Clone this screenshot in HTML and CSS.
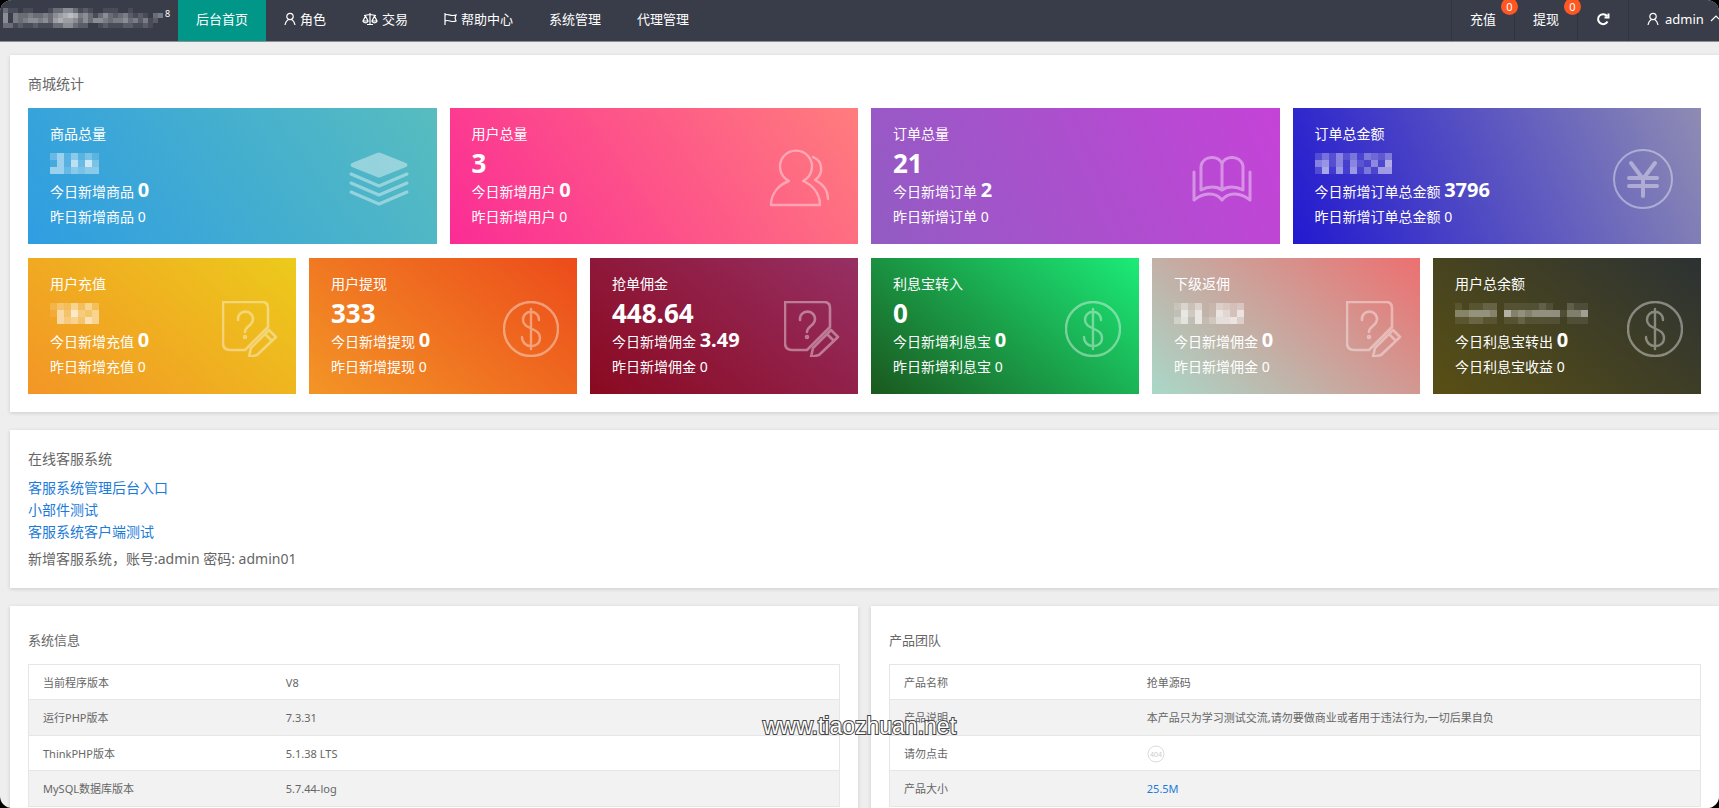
FILE: index.html
```
<!DOCTYPE html>
<html lang="zh-CN">
<head>
    <meta charset="UTF-8">
    <meta name="viewport" content="width=device-width, initial-scale=1.0">
    <title>后台首页</title>
    <link rel="stylesheet" href="styles.css">
</head>
<body>

    <!-- shared icons -->
    <svg class="sprite" aria-hidden="true">
        <symbol id="i-user" viewBox="0 0 12 14">
            <circle cx="6" cy="4.5" r="3.2"/>
            <path d="M4.5 7.5C2.5 8.5 1.5 10.5 1 13M7.5 7.5c2 1 3 3 3.500 5.500"/>
        </symbol>
        <symbol id="i-dollar" viewBox="0 0 56 56" stroke-width="2.4">
            <circle cx="28" cy="28" r="27"/>
            <path d="M36 19C36 8 20 8 20 19C20 29 37 26 37 37C37 48 19 48 19 36M28 8V48"/>
        </symbol>
        <symbol id="i-note" viewBox="0 0 56 56" stroke-width="2.6">
            <path d="M1 1H40Q46 1 46 7V26L23 49H8Q1 49 1 42Z"/>
            <path d="M16 19C15 8 31 8 31 18C31 25 23 25 23 31"/>
            <circle cx="23" cy="36" r="1"/>
            <path d="M27 56L29 47L47 29L54 36L35 54ZM43 33L50 40"/>
        </symbol>
    </svg>

    <div class="app">
        <header class="header">
            <div class="logo"><span class="mosaic small" data-cells="31101100013355312100111001000000/50433433435678745313532342121034/50434554536766535355434453424120/33121121113355322001211122112100"></span><sup>8</sup></div>
            <nav class="nav">
                <a class="active" href="#">后台首页</a>
                <a href="#"><svg class="ico" width="12" height="14"><use href="#i-user"/></svg>角色</a>
                <a href="#"><svg class="ico" width="16" height="14" viewBox="0 0 16 14"><path d="M8 1V12M5 12.500H11M2 3.500L8 2.500L14 3.500M3.500 4L1 9H6ZM12.500 4L10 9H15ZM1 9C1.500 11.500 5.500 11.500 6 9M10 9C10.500 11.500 14.500 11.500 15 9"/></svg>交易</a>
                <a href="#"><svg class="ico" width="13" height="14" viewBox="0 0 13 14"><path d="M1 1V13M1 3C4 1 6 5 12 3L11 6L12 9C7 11 5 7 1 9"/></svg>帮助中心</a>
                <a href="#">系统管理</a>
                <a href="#">代理管理</a>
            </nav>
            <nav class="nav nav-right">
                <a href="#">充值<span class="badge">0</span></a>
                <a href="#">提现<span class="badge">0</span></a>
                <a href="#" aria-label="刷新"><svg class="ico bold" width="14" height="14" viewBox="0 0 14 14"><path d="M11.500 9.500A5 5 0 1 1 11 4M12.500 1.500V5.500H8.500"/></svg></a>
                <a class="account" href="#"><svg class="ico" width="12" height="14"><use href="#i-user"/></svg>admin<svg class="ico caret" width="12" height="14" viewBox="0 0 12 14"><path d="M1 9L6 4L11 9"/></svg></a>
            </nav>
        </header>

        <main class="main">
            <section class="panel">
                <h2 class="title">商城统计</h2>
                <div class="cards cards-4">
                    <div class="card blue">
                        <div>
                            <div class="name">商品总量</div>
                            <div class="total"><span class="mosaic" data-cells="3625242/1628394/6635455"></span></div>
                            <div class="today">今日新增商品 <b>0</b></div>
                            <div class="yesterday">昨日新增商品 0</div>
                        </div>
                        <svg class="pic" viewBox="0 0 60 60">
                            <path class="fill" d="M28 4Q30 3 32 4L57 14Q60 16 57 18L32 28Q30 29 28 28L3 18Q0 16 3 14Z"/>
                            <path class="thick" d="M2 25L30 37L58 25M2 34L30 46L58 34M2 43L30 55L58 43"/>
                        </svg>
                    </div>
                    <div class="card pink">
                        <div>
                            <div class="name">用户总量</div>
                            <div class="total">3</div>
                            <div class="today">今日新增用户 <b>0</b></div>
                            <div class="yesterday">昨日新增用户 0</div>
                        </div>
                        <svg class="pic" viewBox="0 0 60 60">
                            <g stroke-width="2.4">
                                <path d="M19 32A16 16 0 1 1 33 32C43 36 50 45 50 56H1C1 45 8 36 19 32Z"/>
                                <path d="M43 8C53 12 54 25 45 31C53 35 58 42 58 50"/>
                            </g>
                        </svg>
                    </div>
                    <div class="card purple">
                        <div>
                            <div class="name">订单总量</div>
                            <div class="total">21</div>
                            <div class="today">今日新增订单 <b>2</b></div>
                            <div class="yesterday">昨日新增订单 0</div>
                        </div>
                        <svg class="pic" viewBox="0 0 60 60">
                            <path class="thick" d="M2 23V51C11 44 23 42 30 51C37 42 49 44 58 51V23"/>
                            <path class="thick" d="M30 41C25 37 16 37 9 41V17C11 6 28 6 30 15C32 6 49 6 51 17V41C44 37 35 37 30 41V15"/>
                        </svg>
                    </div>
                    <div class="card indigo">
                        <div>
                            <div class="name">订单总金额</div>
                            <div class="total"><span class="mosaic" data-cells="24252414324/56251521517/27161614166"></span></div>
                            <div class="today">今日新增订单总金额 <b>3796</b></div>
                            <div class="yesterday">昨日新增订单总金额 0</div>
                        </div>
                        <svg class="pic" viewBox="0 0 60 60">
                            <circle cx="30" cy="30" r="29"/>
                            <path class="heavy" d="M18 14L30 30L42 14M30 30V47M16 29H44M16 37H44"/>
                        </svg>
                    </div>
                </div>
                <div class="cards cards-6">
                    <div class="card yellow">
                        <div>
                            <div class="name">用户充值</div>
                            <div class="total"><span class="mosaic" data-cells="2436363/1749546/0756486"></span></div>
                            <div class="today">今日新增充值 <b>0</b></div>
                            <div class="yesterday">昨日新增充值 0</div>
                        </div>
                        <svg class="pic"><use href="#i-note"/></svg>
                    </div>
                    <div class="card orange">
                        <div>
                            <div class="name">用户提现</div>
                            <div class="total">333</div>
                            <div class="today">今日新增提现 <b>0</b></div>
                            <div class="yesterday">昨日新增提现 0</div>
                        </div>
                        <svg class="pic"><use href="#i-dollar"/></svg>
                    </div>
                    <div class="card maroon">
                        <div>
                            <div class="name">抢单佣金</div>
                            <div class="total">448.64</div>
                            <div class="today">今日新增佣金 <b>3.49</b></div>
                            <div class="yesterday">昨日新增佣金 0</div>
                        </div>
                        <svg class="pic"><use href="#i-note"/></svg>
                    </div>
                    <div class="card green">
                        <div>
                            <div class="name">利息宝转入</div>
                            <div class="total">0</div>
                            <div class="today">今日新增利息宝 <b>0</b></div>
                            <div class="yesterday">昨日新增利息宝 0</div>
                        </div>
                        <svg class="pic"><use href="#i-dollar"/></svg>
                    </div>
                    <div class="card rose">
                        <div>
                            <div class="name">下级返佣</div>
                            <div class="total"><span class="mosaic" data-cells="2525015434/1838018638/4718137785"></span></div>
                            <div class="today">今日新增佣金 <b>0</b></div>
                            <div class="yesterday">昨日新增佣金 0</div>
                        </div>
                        <svg class="pic"><use href="#i-note"/></svg>
                    </div>
                    <div class="card olive">
                        <div>
                            <div class="name">用户总余额</div>
                            <div class="total"><span class="mosaic" data-cells="1011220111112100211/4455540745455551446/1122110112111110111"></span></div>
                            <div class="today">今日利息宝转出 <b>0</b></div>
                            <div class="yesterday">今日利息宝收益 0</div>
                        </div>
                        <svg class="pic"><use href="#i-dollar"/></svg>
                    </div>
                </div>
            </section>

            <section class="panel">
                <h2 class="title">在线客服系统</h2>
                <ul class="links">
                    <li><a href="#">客服系统管理后台入口</a></li>
                    <li><a href="#">小部件测试</a></li>
                    <li><a href="#">客服系统客户端测试</a></li>
                </ul>
                <p class="note">新增客服系统，账号:admin 密码: admin01</p>
            </section>

            <div class="columns">
                <section class="panel info">
                    <h2 class="title">系统信息</h2>
                    <table class="table">
                        <tr><th>当前程序版本</th><td>V8</td></tr>
                        <tr><th>运行PHP版本</th><td>7.3.31</td></tr>
                        <tr><th>ThinkPHP版本</th><td>5.1.38 LTS</td></tr>
                        <tr><th>MySQL数据库版本</th><td>5.7.44-log</td></tr>
                    </table>
                </section>
                <section class="panel info">
                    <h2 class="title">产品团队</h2>
                    <table class="table">
                        <tr><th>产品名称</th><td>抢单源码</td></tr>
                        <tr><th>产品说明</th><td>本产品只为学习测试交流,请勿要做商业或者用于违法行为,一切后果自负</td></tr>
                        <tr><th>请勿点击</th><td><a class="circle" href="#"><svg width="18" height="18" viewBox="0 0 18 18"><circle cx="9" cy="9" r="8"/><text x="9" y="12" text-anchor="middle">404</text></svg></a></td></tr>
                        <tr><th>产品大小</th><td><a href="#">25.5M</a></td></tr>
                    </table>
                </section>
            </div>
        </main>

        <div class="watermark">www.tiaozhuan.net</div>
    </div>

    <script>
        // hidden values: each digit is the opacity of one cell, "/" starts a new row
        document.querySelectorAll('.mosaic').forEach((el) => {
            const rows = el.dataset.cells.split('/');
            const size = el.classList.contains('small') ? 5 : 7;
            let rects = '';
            rows.forEach((row, y) => {
                [...row].forEach((cell, x) => {
                    rects += `<rect x="${x * size}" y="${y * size}" width="${size}" height="${size}" fill-opacity="${cell / 12}"/>`;
                });
            });
            el.innerHTML = `<svg width="${rows[0].length * size}" height="${rows.length * size}" shape-rendering="crispEdges">${rects}</svg>`;
        });
    </script>

</body>
</html>
```

FILE: styles.css
```
* {
    box-sizing: border-box;
}

html {
    background: #000;
}

body {
    margin: 0;
    font-family: "Noto Sans", "Noto Sans CJK SC", sans-serif;
    font-size: 14px;
    line-height: 22px;
    color: #666;
}

a {
    color: #1c7bd9;
    text-decoration: none;
}

.sprite {
    display: none;
}

.app {
    position: relative;
    height: 100vh;
    overflow: hidden;
    background: #eee;
    border-radius: 12px;
}

/* header */
.header {
    display: flex;
    height: 42px;
    background: #393d49;
    border-bottom: 1px solid #8c8e94;
    color: #fff;
    font-size: 13px;
}

.logo {
    display: flex;
    flex: none;
    width: 178px;
    padding: 8px 0 0 3px;
    gap: 2px;
}

.logo sup {
    font-size: 9px;
    line-height: 12px;
}

.nav {
    display: flex;
}

.nav a {
    position: relative;
    display: flex;
    align-items: center;
    gap: 4px;
    padding: 0 18px 4px;
    color: #fff;
    white-space: nowrap;
}

.nav .active {
    background: #009688;
}

.nav-right {
    margin-left: auto;
}

.nav-right a {
    border-left: 1px solid #31343f;
}

.nav-right .account {
    width: 91px;
    gap: 6px;
}

.ico {
    flex: none;
    fill: none;
    stroke: #fff;
    stroke-width: 1.2;
}

.bold {
    stroke-width: 2;
}

.badge {
    position: absolute;
    top: -2px;
    right: -4px;
    z-index: 1;
    width: 17px;
    height: 17px;
    border-radius: 50%;
    background: #ff5722;
    font-size: 11px;
    line-height: 17px;
    text-align: center;
}

.mosaic svg {
    display: block;
    fill: #fff;
}

/* panels */
.main {
    padding: 13px 0 0 10px;
}

.panel {
    margin-bottom: 18px;
    padding: 18px;
    background: #fff;
    box-shadow: 0 1px 4px rgba(0, 0, 0, 0.15);
}

.title {
    margin: 0;
    font-size: 14px;
    font-weight: normal;
}

/* cards */
.cards {
    display: grid;
    gap: 13px;
    margin-top: 13px;
}

.cards-4 {
    grid-template-columns: repeat(4, 1fr);
}

.cards-6 {
    grid-template-columns: repeat(6, 1fr);
    margin-top: 14px;
}

.card {
    display: flex;
    justify-content: space-between;
    align-items: center;
    padding: 15px 28px 13px 22px;
    color: #fff;
    white-space: nowrap;
}

.cards-6 .card {
    padding-right: 18px;
}

.total {
    display: flex;
    align-items: center;
    height: 36px;
    font-size: 26px;
    font-weight: bold;
}

.today b {
    font-size: 20px;
    line-height: 16px;
}

.yesterday {
    line-height: 28px;
}

.pic {
    flex: none;
    width: 60px;
    height: 60px;
    margin-top: 4px;
    overflow: visible;
    fill: none;
    stroke: #fff;
    stroke-width: 2;
    stroke-linecap: round;
    stroke-linejoin: round;
    opacity: 0.4;
}

.cards-6 .pic {
    width: 56px;
    height: 56px;
}

.pic .fill {
    fill: #fff;
    stroke: none;
}

.pic .thick {
    stroke-width: 3;
}

.pic .heavy {
    stroke-width: 4;
}

.blue {
    background: linear-gradient(-125deg, #57bdbf, #2f9de2);
}

.pink {
    background: linear-gradient(-125deg, #ff7d7d, #fb2c95);
}

.purple {
    background: linear-gradient(-113deg, #c543d8, #925cc3);
}

.indigo {
    background: linear-gradient(-113deg, #8e8cb3, #2219d0);
}

.yellow {
    background: linear-gradient(-141deg, #ecca1b, #f39526);
}

.orange {
    background: linear-gradient(-141deg, #ec4b1b, #f39526);
}

.maroon {
    background: linear-gradient(-141deg, #963064, #8a0920);
}

.green {
    background: linear-gradient(-141deg, #1bec78, #1a581e);
}

.rose {
    background: linear-gradient(-141deg, #ec7070, #a9d8c8);
}

.olive {
    background: linear-gradient(-141deg, #2c3233, #594f14);
}

/* customer service */
.links {
    margin: 7px 0 5px;
    padding: 0;
    list-style: none;
}

.note {
    margin: 0;
}

/* info tables */
.columns {
    display: grid;
    grid-template-columns: 1fr 1fr;
    gap: 13px;
}

.info {
    padding-top: 23px;
}

.info .title {
    font-size: 13px;
}

.table {
    width: 100%;
    margin-top: 13px;
    border: 1px solid #e6e6e6;
    border-collapse: collapse;
    font-size: 11px;
    line-height: 18px;
}

.table tr {
    height: 35px;
    border-bottom: 1px solid #e6e6e6;
}

.table tr:nth-child(even) {
    height: 36px;
    background: #f2f2f2;
}

.table th,
.table td {
    padding: 1px 14px 0;
    font-weight: normal;
    text-align: left;
}

.table th {
    width: 30%;
}

.circle svg {
    display: block;
    fill: none;
    stroke: #ddd;
}

.circle text {
    fill: #ccc;
    stroke: none;
    font-size: 7px;
}

.watermark {
    position: absolute;
    right: 0;
    bottom: 71px;
    left: 0;
    color: #fff;
    font-family: "Liberation Sans", sans-serif;
    font-size: 23px;
    text-align: center;
    -webkit-text-stroke: 2px #444;
    paint-order: stroke fill;
    pointer-events: none;
}
```
